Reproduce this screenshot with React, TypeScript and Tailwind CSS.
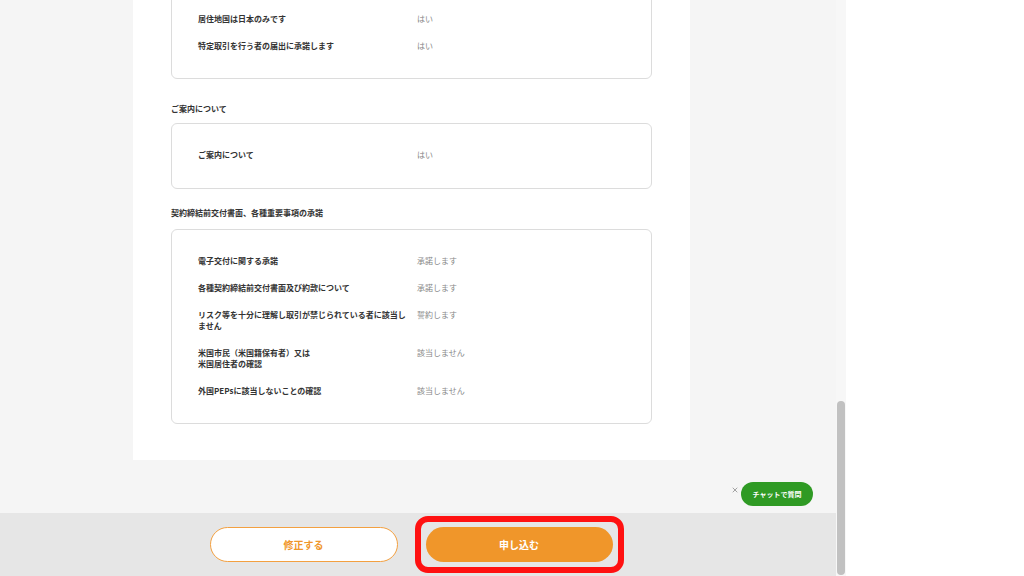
import { X } from 'lucide-react';

const font = { fontFamily: '"Noto Sans CJK JP", "Noto Sans", sans-serif' };

type Row = { label: React.ReactNode; value: string };

function InfoBox({ rows, className }: { rows: Row[]; className: string }) {
  return (
    <div className={`mx-[38px] rounded-[6px] border border-[#dcdcdc] bg-white ${className}`}>
      <div className="flex flex-col gap-[16px]">
        {rows.map((r, i) => (
          <div key={i} className="flex items-start">
            <div className="w-[245px] pl-[26px] pr-[8px] text-[8px] leading-[11px] font-bold text-[#333]">{r.label}</div>
            <div className="text-[8px] leading-[11px] text-[#888]">{r.value}</div>
          </div>
        ))}
      </div>
    </div>
  );
}

export default function App() {
  return (
    <div className="flex h-[576px] w-[1024px] overflow-hidden bg-white" style={font}>
      <div className="relative flex w-[836px] flex-col bg-[#f5f5f5]">
        <div className="flex-1">
          <div className="ml-[133px] w-[557px] bg-white pb-[36px]">
            <InfoBox
              className="-mt-[12px] pt-[24px] pb-[27px]"
              rows={[
                { label: '居住地国は日本のみです', value: 'はい' },
                { label: '特定取引を行う者の届出に承諾します', value: 'はい' },
              ]}
            />
            <div className="mx-[38px] mt-[24px] mb-[9px] text-[8px] leading-[11px] font-bold text-[#333]">ご案内について</div>
            <InfoBox className="pt-[25px] pb-[28px]" rows={[{ label: 'ご案内について', value: 'はい' }]} />
            <div className="mx-[38px] mt-[18px] mb-[11px] text-[8px] leading-[11px] font-bold text-[#333]">
              契約締結前交付書面、各種重要事項の承諾
            </div>
            <InfoBox
              className="pt-[25px] pb-[27px]"
              rows={[
                { label: '電子交付に関する承諾', value: '承諾します' },
                { label: '各種契約締結前交付書面及び約款について', value: '承諾します' },
                { label: 'リスク等を十分に理解し取引が禁じられている者に該当しません', value: '誓約します' },
                {
                  label: (
                    <>
                      米国市民（米国籍保有者）又は
                      <br />
                      米国居住者の確認
                    </>
                  ),
                  value: '該当しません',
                },
                { label: '外国PEPsに該当しないことの確認', value: '該当しません' },
              ]}
            />
          </div>
        </div>

        <div className="absolute right-[23px] top-[482px] flex items-center gap-[2px]">
          <X className="mb-[8px] h-[8px] w-[8px] text-[#777]" strokeWidth={2} />
          <div className="flex h-[24px] w-[72px] items-center justify-center rounded-full bg-[#2f9a24] text-[7px] font-bold text-white">
            チャットで質問
          </div>
        </div>

        <div className="flex h-[63px] items-center justify-center gap-[17px] bg-[#e6e6e6] pr-[3px]">
          <button className="h-[35px] w-[188px] rounded-full border border-[#f3a040] bg-white text-[10px] font-bold text-[#f0962a]">
            修正する
          </button>
          <div className="rounded-[13px] border-[6px] border-[#ff1111] p-[5px]">
            <button className="h-[35px] w-[187px] rounded-full bg-[#f0962a] text-[10px] font-bold text-white">
              申し込む
            </button>
          </div>
        </div>
      </div>
      <div className="flex w-[10px] flex-col justify-end bg-[#f7f7f7] px-[1px] pb-[1px]">
        <div className="h-[174px] rounded-full bg-[#c1c1c1]" />
      </div>
      <div className="flex-1 bg-white" />
    </div>
  );
}
